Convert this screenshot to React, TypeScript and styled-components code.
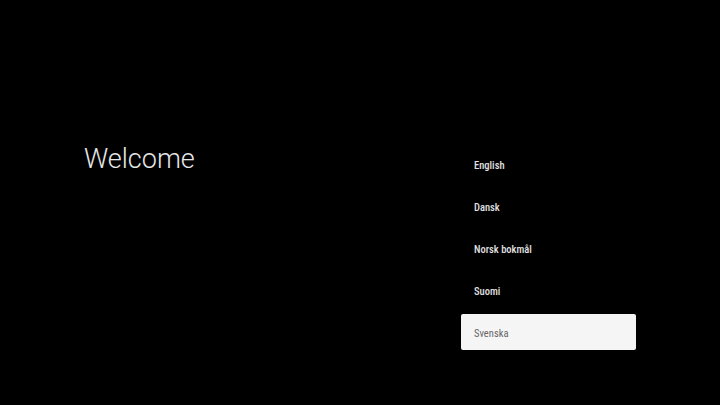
import styled, { createGlobalStyle } from "styled-components";

const languages = ["English", "Dansk", "Norsk bokmål", "Suomi", "Svenska"];
const selected = "Svenska";

const GlobalStyle = createGlobalStyle`
  html, body {
    margin: 0;
    padding: 0;
    background: #000000;
    height: 100%;
  }
  #root {
    height: 100%;
  }
`;

export default function App() {
  return (
    <>
      <GlobalStyle />
      <Screen>
        <Title>Welcome</Title>
        <List>
          {languages.map((lang) => (
            <Item key={lang} isSelected={lang === selected}>
              {lang}
            </Item>
          ))}
        </List>
      </Screen>
    </>
  );
}

const Screen = styled.div`
  display: grid;
  grid-template-columns: 377px 175px;
  align-items: start;
  height: 100%;
  box-sizing: border-box;
  padding: 144px 0 0 84px;
  background: #000000;
  font-family: Roboto, "Liberation Sans", sans-serif;
`;

const Title = styled.h1`
  margin: 0;
  font-family: Roboto, "Liberation Sans", sans-serif;
  font-weight: 300;
  font-size: 27px;
  line-height: 30px;
  color: #e6e6e6;
`;

const List = styled.ul`
  list-style: none;
  margin: 2px 0 0;
  padding: 0;
  display: flex;
  flex-direction: column;
  gap: 6px;
`;

const Item = styled.li<{ isSelected: boolean }>`
  display: flex;
  align-items: center;
  height: 36px;
  padding: 2px 0 0 13px;
  box-sizing: border-box;
  border-radius: 2px;
  font-family: "Roboto Condensed", Roboto, "Liberation Sans", sans-serif;
  font-size: 10.5px;
  font-weight: ${(props) => (props.isSelected ? 400 : 500)};
  color: ${(props) => (props.isSelected ? "#666666" : "#e2e2e2")};
  background: ${(props) => (props.isSelected ? "#f5f5f5" : "transparent")};
`;
